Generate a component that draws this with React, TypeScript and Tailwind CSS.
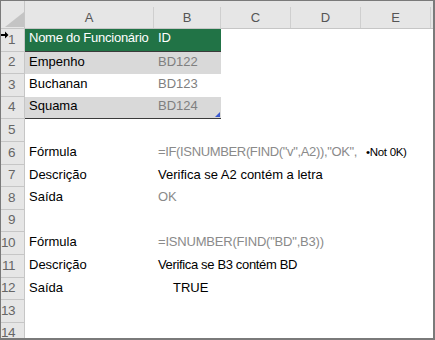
const FONT = { fontFamily: '"Liberation Sans", Arial, sans-serif' };

const ROWS: { a?: React.ReactNode; b?: React.ReactNode; kind?: "head" | "band" | "plain" }[] = [
  { a: <span className="tracking-[-0.25px]">Nome do Funcionário</span>, b: "ID", kind: "head" },
  { a: "Empenho", b: <span className="text-[#7f7f7f]">BD122</span>, kind: "band" },
  { a: "Buchanan", b: <span className="text-[#7f7f7f]">BD123</span>, kind: "plain" },
  { a: "Squama", b: <span className="text-[#7f7f7f]">BD124</span>, kind: "band" },
  {},
  {
    a: "Fórmula",
    b: (
      <>
        <span className="text-[#8a8a8a] tracking-[-0.35px]">=IF(ISNUMBER(FIND("v",A2)),"OK",</span>
        <span className="ml-[9px] text-[11.5px] tracking-[-0.3px] text-black">•Not 0K)</span>
      </>
    ),
  },
  { a: "Descrição", b: "Verifica se A2 contém a letra" },
  { a: "Saída", b: <span className="text-[#8a8a8a]">OK</span> },
  {},
  { a: "Fórmula", b: <span className="text-[#8a8a8a] tracking-[-0.2px]">=ISNUMBER(FIND("BD",B3))</span> },
  { a: "Descrição", b: <span className="tracking-[-0.35px]">Verifica se B3 contém BD</span> },
  { a: "Saída", b: <span className="ml-[15px]">TRUE</span> },
  {},
  {},
];

function Header() {
  return (
    <div className="flex h-[28px] bg-[#e6e6e6] border-b border-[#c6c6c6]">
      <div className="relative w-[24px] shrink-0 border-r border-[#c6c6c6]">
        <svg className="absolute left-[4px] top-[11px]" width="19" height="15" viewBox="0 0 19 15">
          <polygon points="0,15 19,15 19,0" fill="#c4c4c4" />
        </svg>
      </div>
      {[
        ["A", "w-[129px]"],
        ["B", "w-[67px]"],
        ["C", "w-[70px]"],
        ["D", "w-[70px]"],
        ["E", "w-[70px]"],
      ].map(([l, w]) => (
        <div key={l} className={`${w} shrink-0 flex items-end`}>
          <div className="flex h-[21px] w-full items-center justify-center border-r border-[#cfcfcf] text-[13px] text-[#555]">
            {l}
          </div>
        </div>
      ))}
    </div>
  );
}

export default function App() {
  return (
    <div
      style={FONT}
      className="relative h-[340px] w-[435px] overflow-hidden border-t border-l border-r-2 border-b-2 border-[#7a7a7a] bg-white"
    >
      <Header />
      {ROWS.map((r, i) => {
        const bg =
          r.kind === "head" ? "bg-[#217346] text-white" : r.kind === "band" ? "bg-[#d9d9d9] text-black" : "text-black";
        const edge = i === 0 || i === 3 ? "border-b border-[#3a3a3a]" : "";
        return (
          <div key={i} className="flex h-[22.6px]">
            <div className="flex w-[24px] shrink-0 items-center justify-end border-r border-b border-[#c6c6c6] bg-[#e6e6e6] pr-[9px] text-[13.5px] tracking-[-0.5px] text-[#666]">
              {i + 1}
            </div>
            <div
              className={`relative flex w-[196px] shrink-0 items-end whitespace-nowrap pb-[3px] text-[13px] ${r.kind ? bg : ""} ${r.kind ? edge : ""}`}
            >
              <div className="w-[129px] shrink-0 pl-[4px]">{r.a}</div>
              <div className="pl-[4px]">{r.b}</div>
              {i === 3 && (
                <svg className="absolute right-[1px] bottom-[1px]" width="5" height="5" viewBox="0 0 5 5">
                  <polygon points="0,5 5,5 5,0" fill="#3c5bd0" />
                </svg>
              )}
            </div>
          </div>
        );
      })}
      <svg className="absolute left-0 top-[30px]" width="8" height="8" viewBox="0 0 8 8">
        <path d="M0 3h4V0.5L7.5 4 4 7.5V5H0z" fill="#000" />
      </svg>
    </div>
  );
}
